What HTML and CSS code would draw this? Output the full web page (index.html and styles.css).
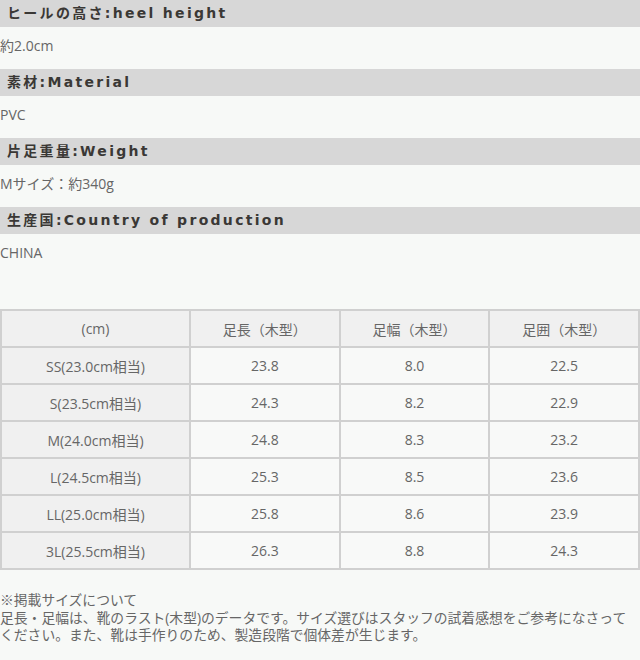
FILE: index.html
```html
<!DOCTYPE html>
<html lang="ja">
<head>
<meta charset="utf-8">
<link rel="stylesheet" href="styles.css">
</head>
<body>
<div class="page">
  <section class="spec">
    <h2 class="spec-title">ヒールの高さ:heel height</h2>
    <p class="spec-value">約2.0cm</p>
  </section>
  <section class="spec">
    <h2 class="spec-title">素材:Material</h2>
    <p class="spec-value">PVC</p>
  </section>
  <section class="spec">
    <h2 class="spec-title">片足重量:Weight</h2>
    <p class="spec-value">Mサイズ：約340g</p>
  </section>
  <section class="spec">
    <h2 class="spec-title">生産国:Country of production</h2>
    <p class="spec-value">CHINA</p>
  </section>

  <table class="size-table">
    <thead>
      <tr><th>(cm)</th><th>足長（木型）</th><th>足幅（木型）</th><th>足囲（木型）</th></tr>
    </thead>
    <tbody>
      <tr><th>SS(23.0cm相当)</th><td>23.8</td><td>8.0</td><td>22.5</td></tr>
      <tr><th>S(23.5cm相当)</th><td>24.3</td><td>8.2</td><td>22.9</td></tr>
      <tr><th>M(24.0cm相当)</th><td>24.8</td><td>8.3</td><td>23.2</td></tr>
      <tr><th>L(24.5cm相当)</th><td>25.3</td><td>8.5</td><td>23.6</td></tr>
      <tr><th>LL(25.0cm相当)</th><td>25.8</td><td>8.6</td><td>23.9</td></tr>
      <tr><th>3L(25.5cm相当)</th><td>26.3</td><td>8.8</td><td>24.3</td></tr>
    </tbody>
  </table>

  <div class="note">
    <p class="note-line">※掲載サイズについて</p>
    <p class="note-line">足長・足幅は、靴のラスト(木型)のデータです。サイズ選びはスタッフの試着感想をご参考になさって</p>
    <p class="note-line">ください。また、靴は手作りのため、製造段階で個体差が生じます。</p>
  </div>
</div>
</body>
</html>
```
FILE: styles.css
```css
html, body {
  margin: 0;
  padding: 0;
  background: #f7f9f7;
}
body {
  font-family: "Open Sans", "Noto Sans CJK JP", sans-serif;
  color: #666;
  font-size: 14px;
}
.page {
  width: 640px;
}
.spec {
  display: block;
}
.spec-title {
  margin: 0;
  height: 27px;
  line-height: 26px;
  background: #d7d7d7;
  padding-left: 7px;
  font-size: 14px;
  font-weight: bold;
  letter-spacing: 2.3px;
  color: #3a3835;
  font-family: "DejaVu Sans", "Noto Sans CJK JP", sans-serif;
}
.spec-value {
  margin: 0;
  height: 42px;
  line-height: 38px;
  font-size: 14px;
  color: #666;
}
.size-table {
  margin-top: 33px;
  width: 640px;
  border-collapse: collapse;
  table-layout: fixed;
  border: 2px solid #d0d0d0;
}
.size-table th,
.size-table td {
  border: 2px solid #d0d0d0;
  height: 35px;
  padding: 0;
  text-align: center;
  font-weight: normal;
  font-size: 14px;
  color: #666;
}
.size-table th:first-child {
  width: 187px;
}
.size-table thead th,
.size-table tbody th {
  background: #f0f0f0;
}
.size-table td {
  background: #f8f9f8;
}
.note {
  margin-top: 21px;
}
.note-line {
  margin: 0;
  line-height: 17.5px;
  font-size: 13.8px;
  color: #666;
  white-space: nowrap;
}
```
